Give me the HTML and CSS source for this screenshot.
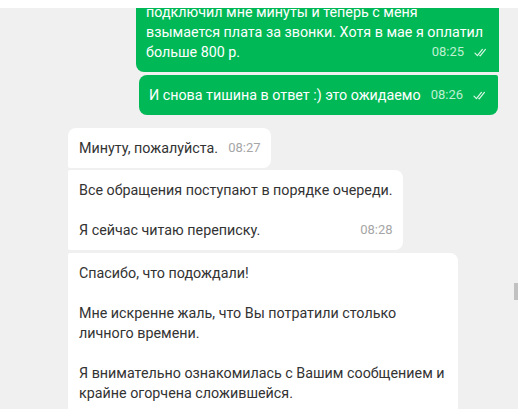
FILE: index.html
```html
<!DOCTYPE html>
<html lang="ru">
<head>
<meta charset="utf-8">
<link rel="stylesheet" href="styles.css">
</head>
<body>
<div class="app">
  <div class="topbar"></div>
  <div class="chat">
    <div class="group out">
      <div class="msg out cut">
        <span class="text">подключил мне минуты и теперь с меня взымается плата за звонки. Хотя в мае я оплатил больше 800 р.</span><span class="meta">08:25<svg class="ticks" viewBox="0 0 14 9" width="14" height="9"><path d="M1 5.2 L3.4 7.6 L8.4 1.4 M5.8 7.4 L6.2 7.8 L11.4 1.4" fill="none" stroke="currentColor" stroke-width="1.2" stroke-linecap="round" stroke-linejoin="round"/></svg></span>
      </div>
      <div class="msg out last">
        <span class="text">И снова тишина в ответ :) это ожидаемо</span><span class="meta">08:26<svg class="ticks" viewBox="0 0 14 9" width="14" height="9"><path d="M1 5.2 L3.4 7.6 L8.4 1.4 M5.8 7.4 L6.2 7.8 L11.4 1.4" fill="none" stroke="currentColor" stroke-width="1.2" stroke-linecap="round" stroke-linejoin="round"/></svg></span>
      </div>
    </div>
    <div class="group in">
      <div class="msg in first">
        <span class="text">Минуту, пожалуйста.</span><span class="meta">08:27</span>
      </div>
      <div class="msg in mid">
        <span class="text">Все обращения поступают в порядке очереди.<br><br>Я сейчас читаю переписку.</span><span class="meta">08:28</span>
      </div>
      <div class="msg in wide">
        <span class="text">Спасибо, что подождали!<br><br>Мне искренне жаль, что Вы потратили столько личного времени.<br><br>Я внимательно ознакомилась с Вашим сообщением и крайне огорчена сложившейся.</span>
      </div>
    </div>
  </div>
  <div class="scroll-thumb"></div>
</div>
</body>
</html>
```
FILE: styles.css
```css
* { box-sizing: border-box; }
html, body {
  margin: 0;
  padding: 0;
  width: 518px;
  height: 409px;
  overflow: hidden;
  background: #f0f0f0;
}
body {
  font-family: Roboto, "Liberation Sans", sans-serif;
  font-size: 14.3px;
  line-height: 20px;
  color: #333333;
}
.app {
  position: relative;
  width: 518px;
  height: 409px;
  display: flex;
  flex-direction: column;
  overflow: hidden;
}
.topbar {
  height: 8px;
  flex: none;
  background: #ffffff;
  position: relative;
  z-index: 2;
}
.chat {
  flex: 1;
  overflow: hidden;
  padding: 0 20px 0 68px;
  display: flex;
  flex-direction: column;
  gap: 13px;
}
.group {
  display: flex;
  flex-direction: column;
  gap: 3px;
}
.group.out { align-items: flex-end; }
.group.in { align-items: flex-start; }
.msg {
  padding: 10px 10px 10px 11px;
  border-radius: 8px;
}
.msg::after {
  content: "";
  display: block;
  clear: both;
}
.msg.out {
  background: #00b956;
  color: #ffffff;
  padding: 10px 11px 10px 10px;
}
.msg.out.cut {
  margin-top: -16px;
  width: 363px;
  margin-right: -1px;
  padding-right: 15px;
  border-radius: 8px 0 0 8px;
}
.msg.out.cut .meta { margin-right: -4px; }
.msg.out.last {
  border-radius: 8px 2px 8px 8px;
}
.msg.in { background: #ffffff; }
.msg.in.first { border-radius: 8px 8px 8px 2px; }
.msg.in.mid { border-radius: 2px 8px 8px 2px; margin-top: -1px; }
.msg.in.wide {
  border-radius: 2px 8px 0 0;
  width: 390px;
  padding-right: 11px;
}
.meta {
  float: right;
  margin-left: 10px;
  font-size: 13px;
  color: #a6a6a6;
  display: inline-flex;
  align-items: center;
  gap: 10px;
}
.msg.out .meta { color: #bff0d2; }
.ticks { color: #d9f7e5; margin-top: 1px; }
.scroll-thumb {
  position: absolute;
  right: 0;
  top: 283px;
  width: 4px;
  height: 17px;
  background: #c1c1c1;
}
```
